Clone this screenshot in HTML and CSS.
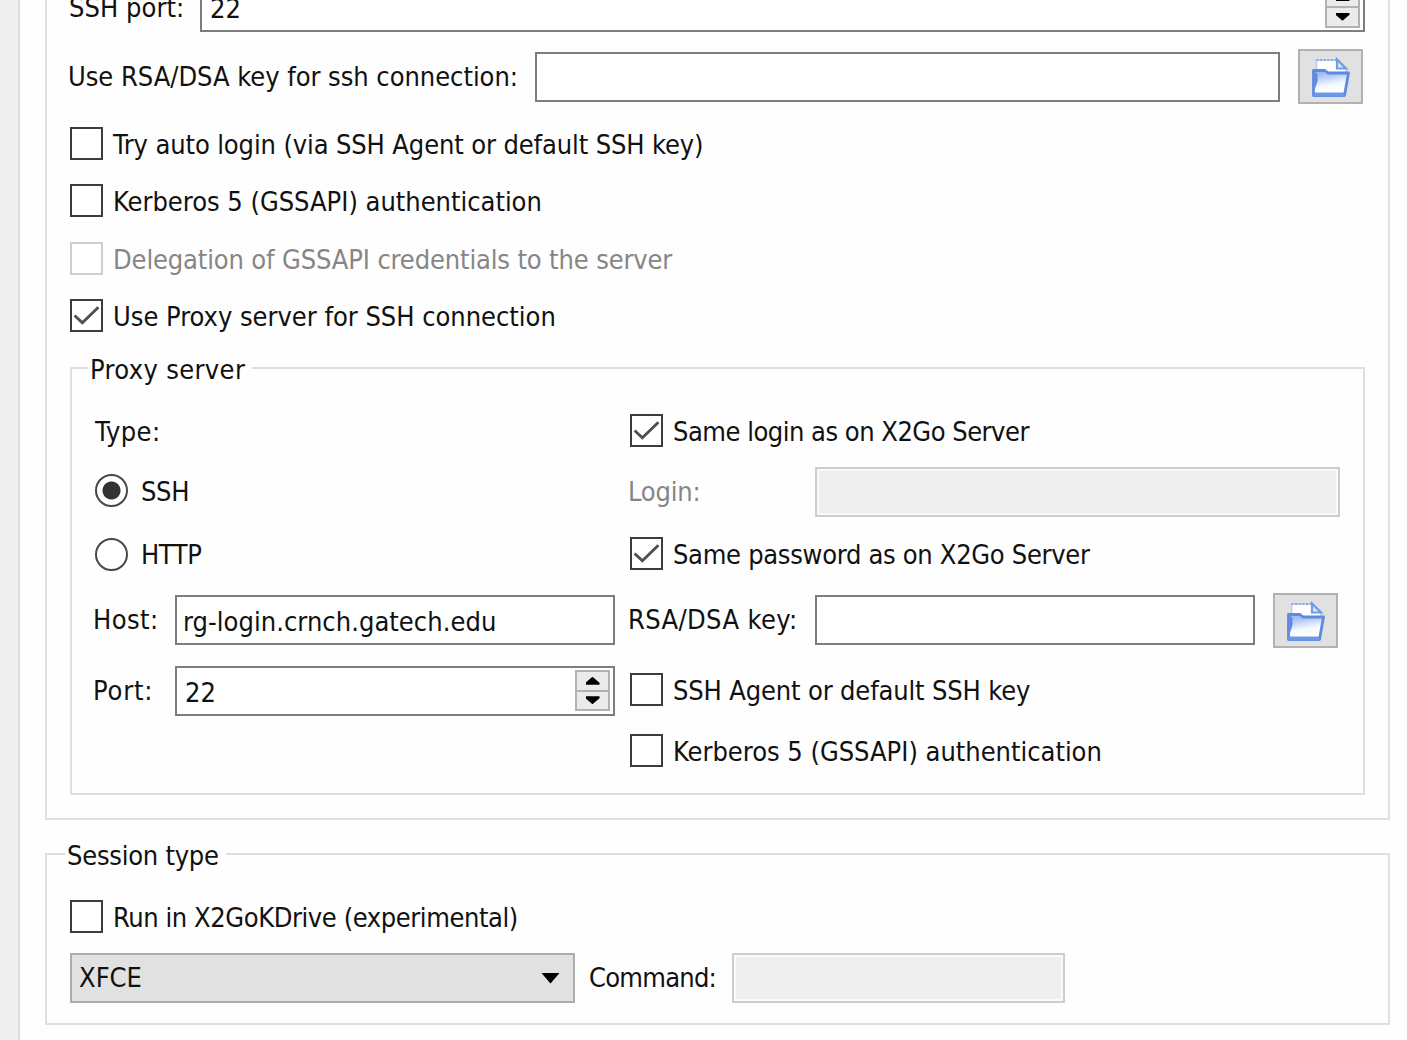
FILE: index.html
```
<!DOCTYPE html>
<html lang="en">
<head>
<meta charset="utf-8">
<title>Session preferences</title>
<link rel="stylesheet" href="styles.css">
</head>
<body>
<svg class="defs" aria-hidden="true">
  <defs>
    <linearGradient id="fold" x1="0" y1="0" x2="0.25" y2="1">
      <stop offset="0" stop-color="#8aaeea"/>
      <stop offset="0.3" stop-color="#b3caf3"/>
      <stop offset="0.65" stop-color="#f6f9fe"/>
      <stop offset="1" stop-color="#ffffff"/>
    </linearGradient>
    <symbol id="folder" viewBox="0 0 61 51">
      <path d="M16.5 22V9H37L46 18V24H16.5Z" fill="#fff" stroke="#b2c9f2" stroke-width="1.5"/>
      <path d="M16.5 9H37" stroke="#86aaea" stroke-width="1.8" stroke-dasharray="2 1.6"/>
      <path d="M37 8.500V17.500H46Z" fill="#dbe6fa" stroke="#709be6" stroke-width="2.200"/>
      <path d="M13.500 44V19.500H25L28 22H48.500L44.500 44.500H13.500Z" fill="url(#fold)" stroke="#5c8ae0" stroke-width="2.800" stroke-linejoin="round"/>
      <path d="M15 21V38L17.500 30V23Z" fill="#5c8ae0"/>
      <path d="M13.500 43.500H44" stroke="#6e98e6" stroke-width="4"/>
    </symbol>
    <symbol id="tick" viewBox="0 0 28 28">
      <path d="M2.500 14L10 21L25.500 6" fill="none" stroke="#505050" stroke-width="2.800"/>
    </symbol>
  </defs>
</svg>
<main class="page">
  <section class="group server">
    <div class="row port-row">
      <span class="label port-label">SSH port:</span>
      <div class="field spin grow"><span class="value">22</span>
        <span class="stepper"><i class="step"><b class="up"></b></i><i class="step"><b class="down"></b></i></span></div>
    </div>
    <div class="row key-row">
      <span class="label key-label">Use RSA/DSA key for ssh connection:</span>
      <div class="field grow"></div>
      <button class="browse"><svg><use href="#folder"/></svg></button>
    </div>
    <div class="options">
      <label class="check"><i class="box"></i><span class="t-auto">Try auto login (via SSH Agent or default SSH key)</span></label>
      <label class="check"><i class="box"></i><span class="t-kerberos">Kerberos 5 (GSSAPI) authentication</span></label>
      <label class="check off"><i class="box"></i><span class="t-delegate">Delegation of GSSAPI credentials to the server</span></label>
      <label class="check"><i class="box"><svg><use href="#tick"/></svg></i><span class="t-kerberos">Use Proxy server for SSH connection</span></label>
    </div>
    <div class="group proxy">
      <h2 class="legend t-proxy">Proxy server</h2>
      <div class="grid">
        <span class="label t-type">Type:</span>
        <label class="check"><i class="box"><svg><use href="#tick"/></svg></i><span class="t-same-login">Same login as on X2Go Server</span></label>

        <label class="check radio"><i class="ring on"></i><span class="t-ssh">SSH</span></label>
        <div class="row"><span class="label side off t-login">Login:</span><div class="field disabled grow"></div></div>

        <label class="check radio"><i class="ring"></i><span class="t-http">HTTP</span></label>
        <label class="check"><i class="box"><svg><use href="#tick"/></svg></i><span class="t-same-pass">Same password as on X2Go Server</span></label>

        <div class="row"><span class="label lead t-host">Host:</span><div class="field grow"><span class="value t-address">rg-login.crnch.gatech.edu</span></div></div>
        <div class="row"><span class="label side t-rsa">RSA/DSA key:</span><div class="field grow"></div><button class="browse"><svg><use href="#folder"/></svg></button></div>

        <div class="row"><span class="label lead t-port">Port:</span><div class="field spin grow"><span class="value">22</span>
          <span class="stepper"><i class="step"><b class="up"></b></i><i class="step"><b class="down"></b></i></span></div></div>
        <label class="check"><i class="box"></i><span class="t-agent">SSH Agent or default SSH key</span></label>

        <span></span>
        <label class="check"><i class="box"></i><span class="t-kerberos">Kerberos 5 (GSSAPI) authentication</span></label>
      </div>
    </div>
  </section>
  <section class="group session">
    <h2 class="legend t-session">Session type</h2>
    <label class="check"><i class="box"></i><span class="t-run">Run in X2GoKDrive (experimental)</span></label>
    <div class="row session-row">
      <div class="combo"><span class="t-xfce">XFCE</span><b class="caret"></b></div>
      <span class="label command-label">Command:</span>
      <div class="field disabled command"></div>
    </div>
  </section>
</main>
</body>
</html>
```
FILE: styles.css
```
* { box-sizing: border-box; }
body {
  margin: 0;
  height: 1040px;
  overflow: hidden;
  background: #efefef;
  color: #111;
  font: 27px/36px "DejaVu Sans Condensed", "DejaVu Sans", sans-serif;
  white-space: nowrap;
}
.defs { display: block; width: 0; height: 0; }
i, b { display: block; font-style: normal; }

.page {
  height: 1040px;
  margin-left: 18px;
  padding-left: 25px;
  border-left: 2px solid #dcdcdc;
  background: #fefefe;
  overflow: hidden;
}
.group { border: 2px solid #dfdfdf; }

/* the form is scrolled, so its first row starts above the viewport */
.server {
  width: 1345px;
  height: 838px;
  margin-top: -18px;
  border-top: 0;
  padding: 0 23px;
}
.row { display: flex; align-items: center; }
.grow { flex: 1; }
.label { flex: none; }
.off { color: #868686; }

/* text fields */
.field {
  display: flex;
  align-items: center;
  height: 50px;
  border: 2px solid #7d7d7d;
  background: #fff;
  padding-left: 6px;
}
.value { padding-top: 4px; }
.field.disabled {
  border-color: #cdcdcd;
  background: #efefef;
  box-shadow: inset 0 0 0 2px #fafafa;
}
.spin { justify-content: space-between; padding: 0 3px 0 8px; }
.stepper {
  display: flex;
  flex-direction: column;
  width: 35px;
  height: 41px;
  border: 2px solid #b2b2b2;
  background: #ebebeb;
}
.step {
  flex: 1;
  display: flex;
  align-items: center;
  justify-content: center;
}
.step + .step { border-top: 2px solid #b2b2b2; }
.up, .down { width: 14px; height: 8px; background: #000; }
.up { clip-path: polygon(50% 0, 100% 75%, 100% 100%, 0 100%, 0 75%); }
.down { clip-path: polygon(0 0, 100% 0, 100% 25%, 50% 100%, 0 25%); }

.browse {
  width: 65px;
  height: 55px;
  margin-left: 18px;
  padding: 0;
  border: 2px solid #b2b2b2;
  background: #e1e1e1;
}
.browse svg { display: block; width: 61px; height: 51px; }

/* top rows */
.port-row { height: 50px; }
.port-label { width: 130px; padding-top: 1px; text-indent: -1px; letter-spacing: .05px; }
.key-row { height: 55px; margin-top: 17px; padding-right: 2px; }
.key-label { width: 465px; text-indent: -2px; letter-spacing: -.04px; }

/* check boxes and radio buttons */
.check { display: flex; align-items: center; gap: 10px; }
.box {
  flex: none;
  width: 33px;
  height: 33px;
  margin-top: -3px;
  border: 2px solid #3c3c3c;
  background: #fff;
}
.box svg { display: block; width: 29px; height: 29px; }
.off .box { border-color: #cfcfcf; }
.options {
  display: grid;
  grid-template-rows: repeat(4, 57.5px);
  margin-top: 12px;
}
.ring {
  flex: none;
  width: 33px;
  height: 33px;
  margin-top: -2px;
  border: 2px solid #484848;
  border-radius: 50%;
  background: #fff;
}
.ring.on { background: radial-gradient(circle, #333 8.500px, #fff 9.500px); }
.radio { gap: 13px; padding-left: 2px; }

/* proxy group */
.legend {
  width: max-content;
  margin: -17px 0 0;
  font: inherit;
  background: #fefefe;
}
.proxy { width: 1295px; height: 428px; margin-top: 21px; padding-left: 16px; }
.proxy .legend { padding: 0 7px 0 2px; }
.grid {
  display: grid;
  grid-template-columns: 522px 710px;
  grid-template-rows: 46px 73px 54px 76px 65px 58px;
  column-gap: 15px;
  align-items: center;
  margin: 21px 0 0 5px;
}
.lead { width: 82px; }
.side { width: 185px; text-indent: -2px; }
.grid .browse { margin-right: 2px; }

/* session group */
.session { width: 1345px; height: 172px; margin-top: 33px; padding-left: 18px; }
.session .legend { padding: 0 7px 0 2px; }
.session .check { height: 46px; margin: 21px 0 0 5px; }
.session-row { height: 50px; margin: 12px 0 0 5px; }
.combo {
  display: flex;
  align-items: center;
  justify-content: space-between;
  width: 505px;
  height: 50px;
  padding: 0 13px 0 7px;
  border: 2px solid #adadad;
  background: #e1e1e1;
}
.caret {
  width: 19px;
  height: 11px;
  background: #000;
  clip-path: polygon(0 0, 100% 0, 50% 100%);
}
.command-label { width: 157px; padding-left: 14px; letter-spacing: -.75px; }
.command { width: 333px; }

/* tracking of the individual captions */
.t-auto { letter-spacing: -.12px; }
.t-kerberos { letter-spacing: -.02px; }
.t-delegate { letter-spacing: -.14px; }
.t-proxy { letter-spacing: .36px; }
.t-type { letter-spacing: .4px; padding-left: 2px; }
.t-same-login { letter-spacing: -.5px; }
.t-same-pass { letter-spacing: -.3px; }
.t-ssh { letter-spacing: -.3px; }
.t-http { letter-spacing: -.4px; }
.t-login { letter-spacing: -.2px; }
.t-host { letter-spacing: .4px; }
.t-address { letter-spacing: .04px; }
.t-rsa { letter-spacing: .36px; }
.t-port { letter-spacing: .8px; }
.t-agent { letter-spacing: -.15px; }
.t-session { letter-spacing: -.25px; }
.t-run { letter-spacing: -.42px; }
.t-xfce { letter-spacing: 0; }
```
